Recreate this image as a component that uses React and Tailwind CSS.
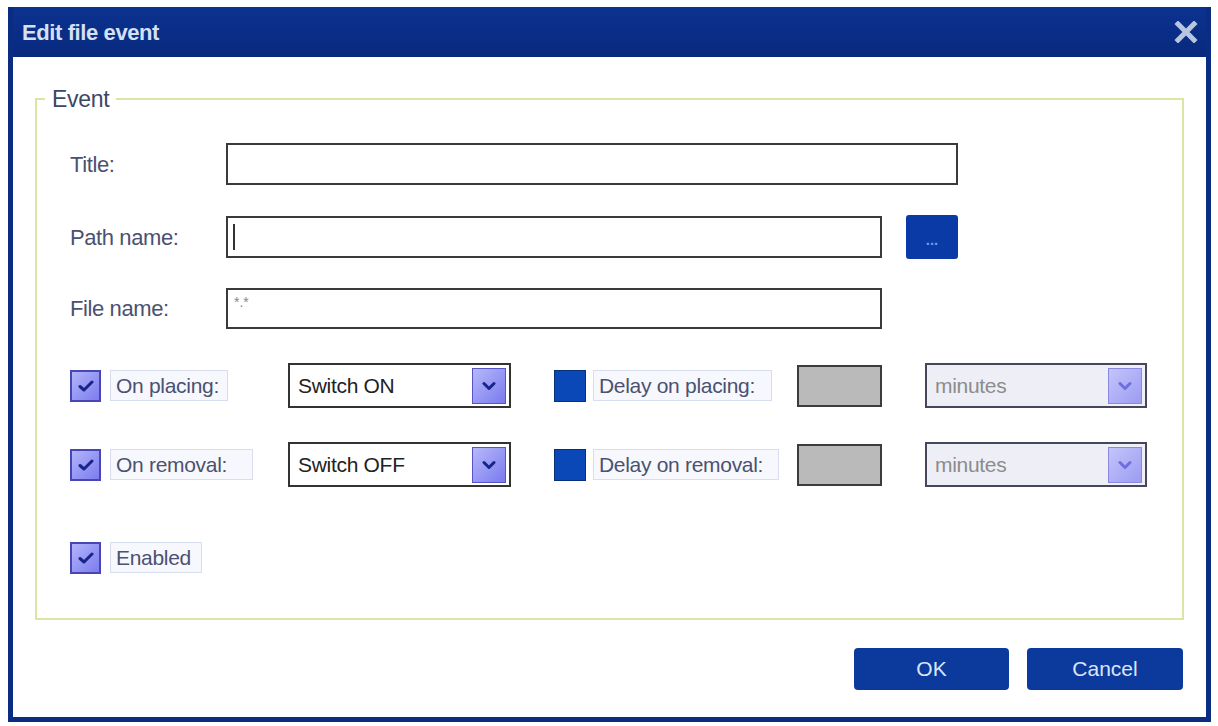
const font = "font-['Liberation_Sans',Arial,sans-serif]";

function Check({ checked = true }) {
  if (!checked) {
    return <div className="h-[32px] w-[32px] shrink-0 border border-[#06307a] bg-[#0a48b8]" />;
  }
  return (
    <div className="flex h-[32px] w-[31px] shrink-0 items-center justify-center border-2 border-[#4846b4] bg-gradient-to-br from-[#b4b4fa] to-[#7c7cee]">
      <svg width="16" height="14" viewBox="0 0 16 14" aria-hidden>
        <path d="M2 7.5 L6 11 L14 3" fill="none" stroke="#17248a" strokeWidth="3" strokeLinecap="round" strokeLinejoin="round" />
      </svg>
    </div>
  );
}

function Label({ children, width }) {
  return (
    <div
      className={`flex h-[31px] items-center border border-[#d9ddf0] bg-[#f7f8fd] pl-[5px] text-[21px] tracking-[-0.3px] text-[#4b5170] ${width}`}
    >
      {children}
    </div>
  );
}

function Select({ value, width, disabled = false }) {
  return (
    <div
      className={`flex h-[45px] shrink-0 items-center justify-between border-2 ${
        disabled ? 'border-[#46465a] bg-[#eeeef6]' : 'border-[#333] bg-white'
      } pl-[8px] pr-[3px] ${width}`}
    >
      <span className={`text-[21px] tracking-[-0.3px] ${disabled ? 'text-[#8c8c8c]' : 'text-[#222]'}`}>{value}</span>
      <div
        className={`flex h-[36px] w-[34px] items-center justify-center border ${
          disabled
            ? 'border-[#8a88e0] bg-gradient-to-br from-[#c4c4fa] to-[#9c9cf2]'
            : 'border-[#5654c6] bg-gradient-to-br from-[#b8b8fa] to-[#7a7aee]'
        }`}
      >
        <svg width="14" height="10" viewBox="0 0 14 10" aria-hidden>
          <path d="M2 2.5 L7 7.5 L12 2.5" fill="none" stroke={disabled ? '#6e6ee0' : '#17248a'} strokeWidth="3" strokeLinecap="round" strokeLinejoin="round" />
        </svg>
      </div>
    </div>
  );
}

function TextRow({ label, children, className }) {
  return (
    <div className={`flex items-center ${className}`}>
      <div className="w-[156px] text-[22px] tracking-[-0.4px] text-[#4b5170]">{label}</div>
      {children}
    </div>
  );
}

function EventRow({ label, labelWidth, value, delayLabel, delayWidth, className }) {
  return (
    <div className={`flex h-[45px] items-center ${className}`}>
      <Check />
      <div className="ml-[9px] w-[178px]">
        <Label width={labelWidth}>{label}</Label>
      </div>
      <Select value={value} width="w-[223px]" />
      <div className="ml-[43px]">
        <Check checked={false} />
      </div>
      <div className="ml-[7px] w-[204px]">
        <Label width={delayWidth}>{delayLabel}</Label>
      </div>
      <div className="h-[42px] w-[85px] shrink-0 border-2 border-[#3c3c3c] bg-[#bababa]" />
      <div className="ml-[43px]">
        <Select value="minutes" width="w-[222px]" disabled />
      </div>
    </div>
  );
}

export default function App() {
  return (
    <div className={`min-h-[726px] bg-white pt-[7px] pl-[8px] ${font}`}>
      <div className="w-[1203px] bg-[#0a2c82] px-[5px] pb-[5px]">
        <div className="flex h-[50px] items-center justify-between bg-gradient-to-b from-[#0c3290] to-[#082a7e] pl-[9px] pr-[8px]">
          <span className="text-[22px] font-bold tracking-[-0.4px] text-[#d6e0f4]">Edit file event</span>
          <svg width="24" height="22" viewBox="0 0 24 22" aria-hidden>
            <path d="M4 3 L20 19 M20 3 L4 19" stroke="#b9c6e2" strokeWidth="5" strokeLinecap="square" />
          </svg>
        </div>

        <div className="flex flex-col bg-white pt-[30px] pb-[27px]">
          <fieldset className="mx-[22px] border-2 border-[#dce5a4] px-0 pb-[44px]">
            <legend className="ml-[8px] px-[7px] text-[23px] leading-[24px] tracking-[-0.3px] text-[#3b4766]">Event</legend>
            <div className="flex flex-col pl-[33px]">
              <TextRow label="Title:" className="mt-[32px] h-[42px]">
                <div className="h-[42px] w-[732px] border-2 border-[#3a3a3a] bg-white" />
              </TextRow>
              <TextRow label="Path name:" className="mt-[30px] h-[44px]">
                <div className="flex h-[42px] w-[656px] items-center border-2 border-[#3a3a3a] bg-white pl-[5px]">
                  <span className="h-[26px] w-[2px] bg-[#333]" />
                </div>
                <button
                  type="button"
                  className="ml-[24px] flex h-[44px] w-[52px] items-center justify-center rounded-[3px] bg-[#0a3aa6] pt-[6px] text-[15px] font-bold text-[#6d9cf0]"
                >
                  ...
                </button>
              </TextRow>
              <TextRow label="File name:" className="mt-[29px] h-[41px]">
                <div className="flex h-[41px] w-[656px] items-start border-2 border-[#3a3a3a] bg-white pl-[6px] pt-[2px] text-[14px] text-[#888]">
                  *.*
                </div>
              </TextRow>

              <EventRow
                className="mt-[34px]"
                label="On placing:"
                labelWidth="w-[118px]"
                value="Switch ON"
                delayLabel="Delay on placing:"
                delayWidth="w-[179px]"
              />
              <EventRow
                className="mt-[34px]"
                label="On removal:"
                labelWidth="w-[143px]"
                value="Switch OFF"
                delayLabel="Delay on removal:"
                delayWidth="w-[186px]"
              />

              <div className="mt-[54px] flex h-[33px] items-center">
                <Check />
                <div className="ml-[9px]">
                  <Label width="w-[92px]">Enabled</Label>
                </div>
              </div>
            </div>
          </fieldset>

          <div className="mt-[28px] flex justify-end gap-[18px] pr-[23px]">
            <button type="button" className="h-[42px] w-[155px] rounded-[4px] bg-[#0b3a9c] text-[21px] text-[#dbe5f8]">
              OK
            </button>
            <button type="button" className="h-[42px] w-[156px] rounded-[4px] bg-[#0b3a9c] text-[21px] text-[#dbe5f8]">
              Cancel
            </button>
          </div>
        </div>
      </div>
    </div>
  );
}
